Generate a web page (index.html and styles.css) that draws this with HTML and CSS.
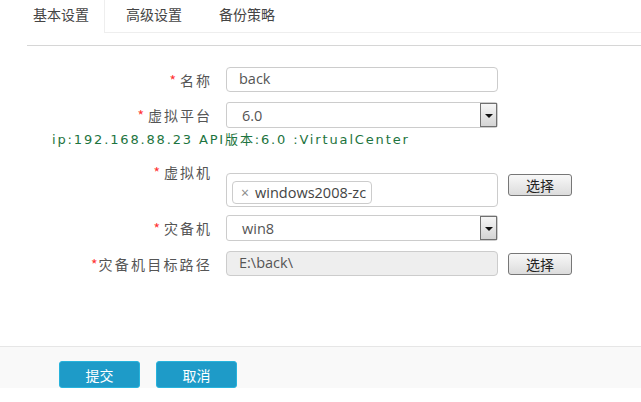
FILE: index.html
```html
<!DOCTYPE html>
<html lang="zh-CN">
<head>
<meta charset="utf-8">
<title>基本设置</title>
<link rel="stylesheet" href="styles.css">
</head>
<body>
<div class="page">
  <ul class="tabs">
    <li class="tab tab-active">基本设置</li>
    <li class="tab">高级设置</li>
    <li class="tab">备份策略</li>
  </ul>
  <div class="divider"></div>
  <form class="form">
    <div class="row row-name">
      <label class="label"><span class="req">*</span>名称</label>
      <div class="input">back</div>
    </div>
    <div class="row row-platform">
      <label class="label"><span class="req">*</span>虚拟平台</label>
      <div class="select"><span class="select-text">6.0</span><span class="select-arrow"></span></div>
    </div>
    <div class="info">ip:192.168.88.23 API版本:6.0 :VirtualCenter</div>
    <div class="row row-vm">
      <label class="label label-top"><span class="req">*</span>虚拟机</label>
      <div class="tagbox"><span class="tag"><span class="tag-x">×</span>windows2008-zc</span></div>
      <button type="button" class="btn-choose btn-choose-top">选择</button>
    </div>
    <div class="row row-dr">
      <label class="label"><span class="req">*</span>灾备机</label>
      <div class="select"><span class="select-text">win8</span><span class="select-arrow"></span></div>
    </div>
    <div class="row row-path">
      <label class="label label-wide"><span class="req req-tight">*</span>灾备机目标路径</label>
      <div class="input input-disabled">E:\back\</div>
      <button type="button" class="btn-choose">选择</button>
    </div>
  </form>
  <div class="footer">
    <button type="button" class="btn-primary">提交</button>
    <button type="button" class="btn-primary">取消</button>
  </div>
</div>
</body>
</html>
```
FILE: styles.css
```css
* { box-sizing: border-box; }
html, body { margin: 0; padding: 0; background: #fff; }
body {
  font-family: "Noto Sans CJK SC", "Noto Sans", sans-serif;
  color: #444;
  width: 641px;
  height: 402px;
  overflow: hidden;
}
.page { width: 641px; }

.tabs {
  list-style: none;
  margin: 0;
  padding: 0;
  display: flex;
  height: 33px;
  border-bottom: 1px solid #eeeeee;
}
.tab {
  font-size: 14px;
  line-height: 29px;
  color: #444;
  padding: 0 16px 0 21px;
  height: 33px;
}
.tab-active {
  padding: 0 15px 0 33px;
  background: #fff;
  border-right: 1px solid #eeeeee;
  height: 33px;
  margin-bottom: -1px;
}

.divider {
  margin: 12px 0 0 27px;
  border-top: 1px solid #d6d6d6;
}

.form {
  padding-top: 21px;
  display: flex;
  flex-direction: column;
}
.row {
  display: flex;
  align-items: center;
}
.label {
  width: 212px;
  margin-right: 14px;
  text-align: right;
  font-size: 14px;
  letter-spacing: 2px;
  color: #555;
  line-height: 20px;
  white-space: nowrap;
}
.label-wide { letter-spacing: 2.2px; }
.req { color: #f33; margin-right: 4px; letter-spacing: 0; }
.req-tight { margin-right: 1px; }

.input {
  width: 272px;
  height: 25px;
  border: 1px solid #cccccc;
  border-radius: 4px;
  padding-left: 12px;
  font-family: "Open Sans", "Noto Sans CJK SC", sans-serif;
  font-size: 14.5px;
  line-height: 22px;
  color: #555;
  background: #fff;
}
.input-disabled { background: #eeeeee; }

.select {
  width: 272px;
  height: 26px;
  border: 1px solid #cccccc;
  border-radius: 3px;
  display: flex;
  align-items: center;
  justify-content: space-between;
  background: #fff;
  padding-left: 15px;
  font-family: "Open Sans", "Noto Sans CJK SC", sans-serif;
  font-size: 14.5px;
  color: #555;
}
.select-arrow {
  position: relative;
  width: 17px;
  height: 24px;
  border: 1px solid #707070;
  background: linear-gradient(#f6f6f6, #d4d4d4);
}
.select-arrow::after {
  content: "";
  position: absolute;
  left: 4px;
  top: 10px;
  border-left: 4px solid transparent;
  border-right: 4px solid transparent;
  border-top: 4px solid #111;
}

.row-name { height: 25px; }
.row-platform { margin-top: 10px; }

.info {
  margin: 2px 0 0 52px;
  font-family: "DejaVu Sans", Verdana, sans-serif;
  font-size: 13px;
  letter-spacing: 1.85px;
  line-height: 20px;
  color: #1d7440;
}

.row-vm { margin-top: 12px; align-items: flex-start; }
.tagbox {
  margin-top: 11px;
  width: 272px;
  height: 34px;
  border: 1px solid #cccccc;
  border-radius: 4px;
  padding: 5px 0 0 5px;
}
.tag {
  display: inline-flex;
  align-items: center;
  height: 23px;
  border: 1px solid #cccccc;
  border-radius: 4px;
  padding: 0 5px 0 8px;
  font-family: "Open Sans", "Noto Sans CJK SC", sans-serif;
  font-size: 14.5px;
  color: #444;
  background: #fff;
}
.tag-x { color: #888; margin-right: 6px; font-size: 14px; }

.btn-choose {
  margin-left: 10px;
  width: 64px;
  height: 22px;
  border: 1px solid #777;
  border-radius: 3px;
  background: linear-gradient(#f8f8f8, #dcdcdc);
  font-family: "Noto Sans CJK SC", sans-serif;
  font-size: 14px;
  line-height: 18px;
  color: #222;
  padding: 0;
}
.btn-choose-top { margin-top: 12px; }

.row-dr { margin-top: 8px; }
.row-path { margin-top: 10px; }

.footer {
  margin-top: 70px;
  height: 42px;
  border-top: 1px solid #e6e6e6;
  background: #f9f9f9;
  padding: 14px 0 0 59px;
  display: flex;
  gap: 16px;
}
.btn-primary {
  width: 81px;
  height: 27px;
  background: #1e9bc8;
  border: 1px solid #27b3dc;
  border-radius: 3px;
  color: #fff;
  font-family: "Noto Sans CJK SC", sans-serif;
  font-size: 14px;
  line-height: 22px;
  padding: 0;
}
```
